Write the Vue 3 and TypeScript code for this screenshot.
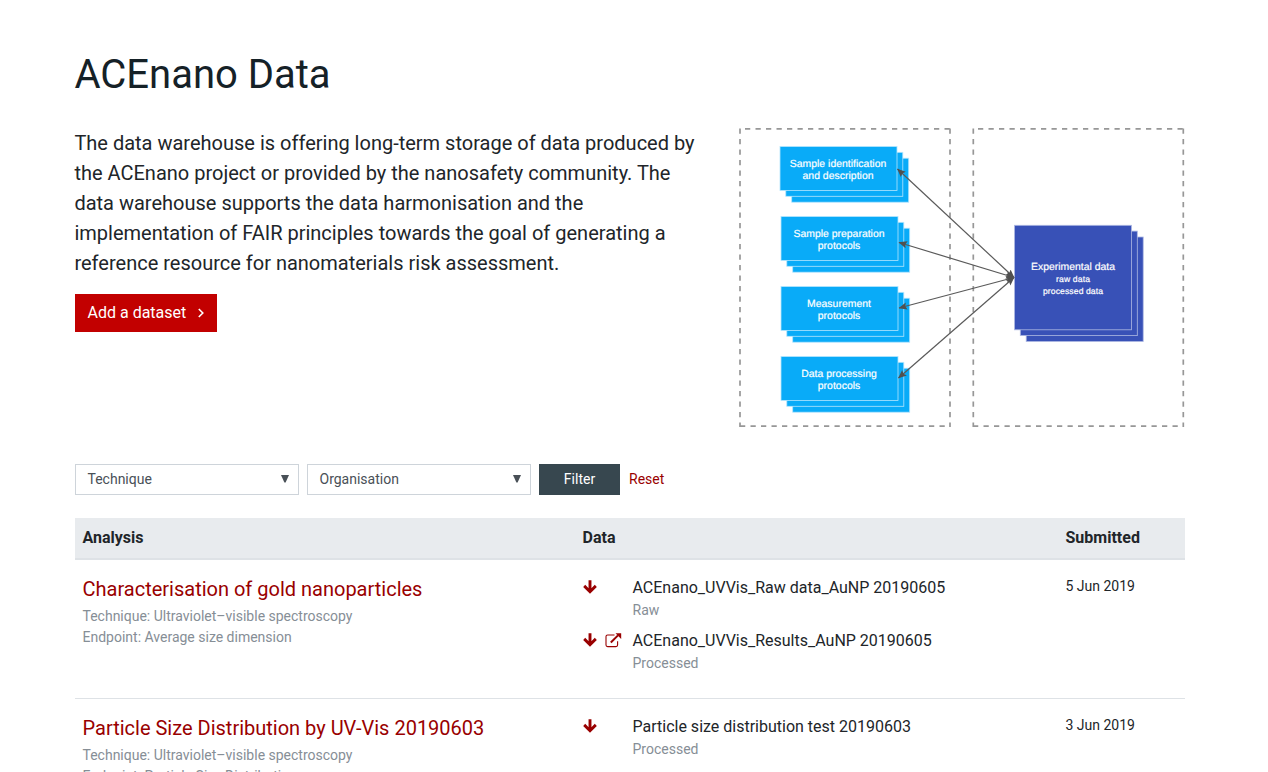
<script setup lang="ts">
interface DataFile {
  name: string
  kind: string
  viewable?: boolean
}
interface Dataset {
  title: string
  technique: string
  endpoint: string
  submitted: string
  files: DataFile[]
}
interface Label {
  text: string
  width: number
}
interface Stack {
  x: number
  y: number
  labels: Label[]
}

const filters: string[] = ['Technique', 'Organisation']

const datasets: Dataset[] = [
  {
    title: 'Characterisation of gold nanoparticles',
    technique: 'Ultraviolet–visible spectroscopy',
    endpoint: 'Average size dimension',
    submitted: '5 Jun 2019',
    files: [
      { name: 'ACEnano_UVVis_Raw data_AuNP 20190605', kind: 'Raw' },
      { name: 'ACEnano_UVVis_Results_AuNP 20190605', kind: 'Processed', viewable: true },
    ],
  },
  {
    title: 'Particle Size Distribution by UV-Vis 20190603',
    technique: 'Ultraviolet–visible spectroscopy',
    endpoint: 'Particle Size Distribution',
    submitted: '3 Jun 2019',
    files: [{ name: 'Particle size distribution test 20190603', kind: 'Processed' }],
  },
]

const stacks: Stack[] = [
  { x: 780, y: 146.5, labels: [{ text: 'Sample identification', width: 96.5 }, { text: 'and description', width: 71 }] },
  { x: 781, y: 216.5, labels: [{ text: 'Sample preparation', width: 91 }, { text: 'protocols', width: 42.5 }] },
  { x: 781, y: 286.5, labels: [{ text: 'Measurement', width: 64 }, { text: 'protocols', width: 42.5 }] },
  { x: 781, y: 356.5, labels: [{ text: 'Data processing', width: 75.5 }, { text: 'protocols', width: 42.5 }] },
]
const links: [number, number][] = [
  [897.5, 169],
  [899, 242.5],
  [899, 308],
  [898.5, 378],
]
const layers: number[] = [11.7, 5.8, 0]
</script>

<template>
  <main class="page">
    <h1>ACEnano Data</h1>

    <section class="intro">
      <div class="about">
        <p>
          The data warehouse is offering long-term storage of data produced by the ACEnano project or
          provided by the nanosafety community. The data warehouse supports the data harmonisation and
          the implementation of FAIR principles towards the goal of generating a reference resource for
          nanomaterials risk assessment.
        </p>
        <a class="add">
          Add a dataset
          <svg width="8" height="12" viewBox="0 0 8 12"><path d="M1.8 2 5.8 6 1.8 10" fill="none" stroke="#fff" stroke-width="1.6" /></svg>
        </a>
      </div>

      <svg class="diagram" width="450" height="304" viewBox="737 126 450 304">
        <defs>
          <marker id="tip" viewBox="0 0 8 8" refX="7.5" refY="4" markerWidth="8.5" markerHeight="8.5" markerUnits="userSpaceOnUse" orient="auto-start-reverse">
            <path d="M0 .6 8 4 0 7.4 1.4 4Z" fill="#505050" />
          </marker>
        </defs>
        <g fill="none" stroke="#979797" stroke-width="1.7" stroke-dasharray="5.25 5.25">
          <path stroke-dashoffset="-5" d="M740 128.8H950M973 128.8H1183.5" />
          <path stroke-dashoffset="0" d="M740 426.2H950M973 426.2H1183.5" />
          <path stroke-dashoffset="-.6" d="M740 128V427M950 128V427M973.3 128V427M1183.3 128V427" />
        </g>
        <g v-for="(s, i) in stacks" :key="i">
          <rect v-for="o in layers" :key="o" :x="s.x + o" :y="s.y + o" width="117" height="44" fill="#09abf8" stroke="#b5e5fd" stroke-width=".8" />
          <text v-for="(l, j) in s.labels" :key="j" :x="s.x + 58" :y="s.y + 20.2 + j * 12" :textLength="l.width" class="node">{{ l.text }}</text>
        </g>
        <g>
          <rect v-for="o in layers" :key="o" :x="1014.5 + o" :y="225.3 + o" width="117" height="104.5" fill="#3851b7" stroke="#aeb9e3" stroke-width=".8" />
          <text x="1073" y="269.8" textLength="84" class="node">Experimental data</text>
          <text x="1073" y="282" textLength="34" class="node detail">raw data</text>
          <text x="1073" y="294.3" textLength="60" class="node detail">processed data</text>
        </g>
        <line v-for="([x, y], i) in links" :key="i" :x1="x" :y1="y" x2="1014" y2="277.5" stroke="#5a5a5a" stroke-width="1.2" marker-start="url(#tip)" marker-end="url(#tip)" />
      </svg>
    </section>

    <form class="filters">
      <div v-for="f in filters" :key="f" class="select">
        <span>{{ f }}</span>
        <svg width="8" height="8" viewBox="0 0 8 8"><path d="M0 0H8L4.6 7.6H3.4Z" fill="#495057" /></svg>
      </div>
      <button type="button">Filter</button>
      <a>Reset</a>
    </form>

    <div class="table">
      <div class="row head">
        <span>Analysis</span>
        <span>Data</span>
        <span>Submitted</span>
      </div>
      <div v-for="d in datasets" :key="d.title" class="row entry">
        <div>
          <a class="title">{{ d.title }}</a>
          <p class="meta">Technique: {{ d.technique }}</p>
          <p class="meta">Endpoint: {{ d.endpoint }}</p>
        </div>
        <div>
          <div v-for="f in d.files" :key="f.name" class="file">
            <div class="icons">
              <svg width="14" height="14" viewBox="0 0 14 14"><path d="M7 .2V12M1.2 5.9 7 11.7 12.8 5.9" fill="none" stroke="#900" stroke-width="2.9" /></svg>
              <svg v-if="f.viewable" width="17" height="15" viewBox="0 0 17 15">
                <path d="M9.5 2H2.6Q1 2 1 3.6V12Q1 13.6 2.6 13.6H11Q12.6 13.6 12.6 12V8.3" fill="none" stroke="#900" stroke-width="1.1" />
                <path d="M5.8 9.5 13 2.4" stroke="#900" stroke-width="2" />
                <path d="M10.5 .3H16.2V6Z" fill="#900" />
              </svg>
            </div>
            <div>
              <div class="name">{{ f.name }}</div>
              <div class="kind">{{ f.kind }}</div>
            </div>
          </div>
        </div>
        <div class="date">{{ d.submitted }}</div>
      </div>
    </div>
  </main>
</template>

<style>
body {
  margin: 0;
  background: #fff;
}
</style>

<style scoped>
.page {
  box-sizing: border-box;
  height: 772px;
  overflow: hidden;
  padding: 51px 83px 0 75px;
  font: 16px/24px Roboto, sans-serif;
  color: #212529;
}
h1 {
  margin: 0 0 0 -0.6px;
  font-size: 40px;
  line-height: 48px;
  font-weight: 400;
  color: #152127;
}
p {
  margin: 0;
}
.intro {
  display: flex;
  justify-content: space-between;
  height: 336px;
  margin-top: 27px;
}
.about {
  width: 630px;
  padding-top: 2px;
}
.about p {
  margin-left: -0.6px;
  font-size: 20px;
  line-height: 30px;
}
.diagram {
  flex: none;
  margin-right: -2px;
}
.node {
  font: 10.4px "Liberation Sans", Arial, sans-serif;
  fill: #fff;
  stroke: #fff;
  stroke-width: 0.2px;
  text-anchor: middle;
  text-rendering: geometricPrecision;
}
.detail {
  font-size: 8.6px;
}
.add {
  display: flex;
  align-items: center;
  justify-content: space-between;
  box-sizing: border-box;
  width: 142px;
  height: 38px;
  margin-top: 16px;
  padding: 0 12px 0 12.5px;
  background: #c20000;
  color: #fff;
}
.filters {
  display: flex;
  gap: 8px;
  height: 31px;
  margin-top: 2px;
  font-size: 14px;
  line-height: 21px;
}
.select {
  display: flex;
  align-items: center;
  justify-content: space-between;
  box-sizing: border-box;
  width: 224px;
  padding: 0 9px 0 11.5px;
  border: 1px solid #ced4da;
  color: #495057;
}
.select svg {
  margin-top: -2px;
}
.filters button {
  width: 81px;
  padding: 0;
  border: 0;
  background: #37474f;
  color: #fff;
  font: 400 14px/21px Roboto, sans-serif;
}
.filters a {
  padding-top: 5px;
  margin-left: 1px;
  color: #900;
}
.table {
  margin-top: 23px;
}
.row {
  display: grid;
  grid-template-columns: 500px 483px 127px;
}
.row > * {
  padding-left: 7.5px;
}
.head {
  box-sizing: border-box;
  height: 42px;
  padding-top: 8px;
  background: #e8ebee;
  border-bottom: 2px solid #dee2e6;
  font-weight: 700;
}
.entry {
  height: 138px;
  padding-top: 14px;
  box-sizing: border-box;
}
.entry + .entry {
  border-top: 1px solid #dee2e6;
}
.title {
  display: block;
  margin-bottom: 2px;
  font-size: 20px;
  line-height: 30px;
  color: #900;
}
.meta {
  font-size: 14px;
  line-height: 21px;
  color: #868e96;
}
.file {
  display: flex;
  height: 53px;
}
.icons {
  display: flex;
  gap: 8px;
  width: 50px;
  padding-top: 6px;
}
.name {
  padding-top: 2px;
}
.kind {
  font-size: 14px;
  line-height: 21px;
  color: #868e96;
}
.date {
  font-size: 14px;
}
</style>
